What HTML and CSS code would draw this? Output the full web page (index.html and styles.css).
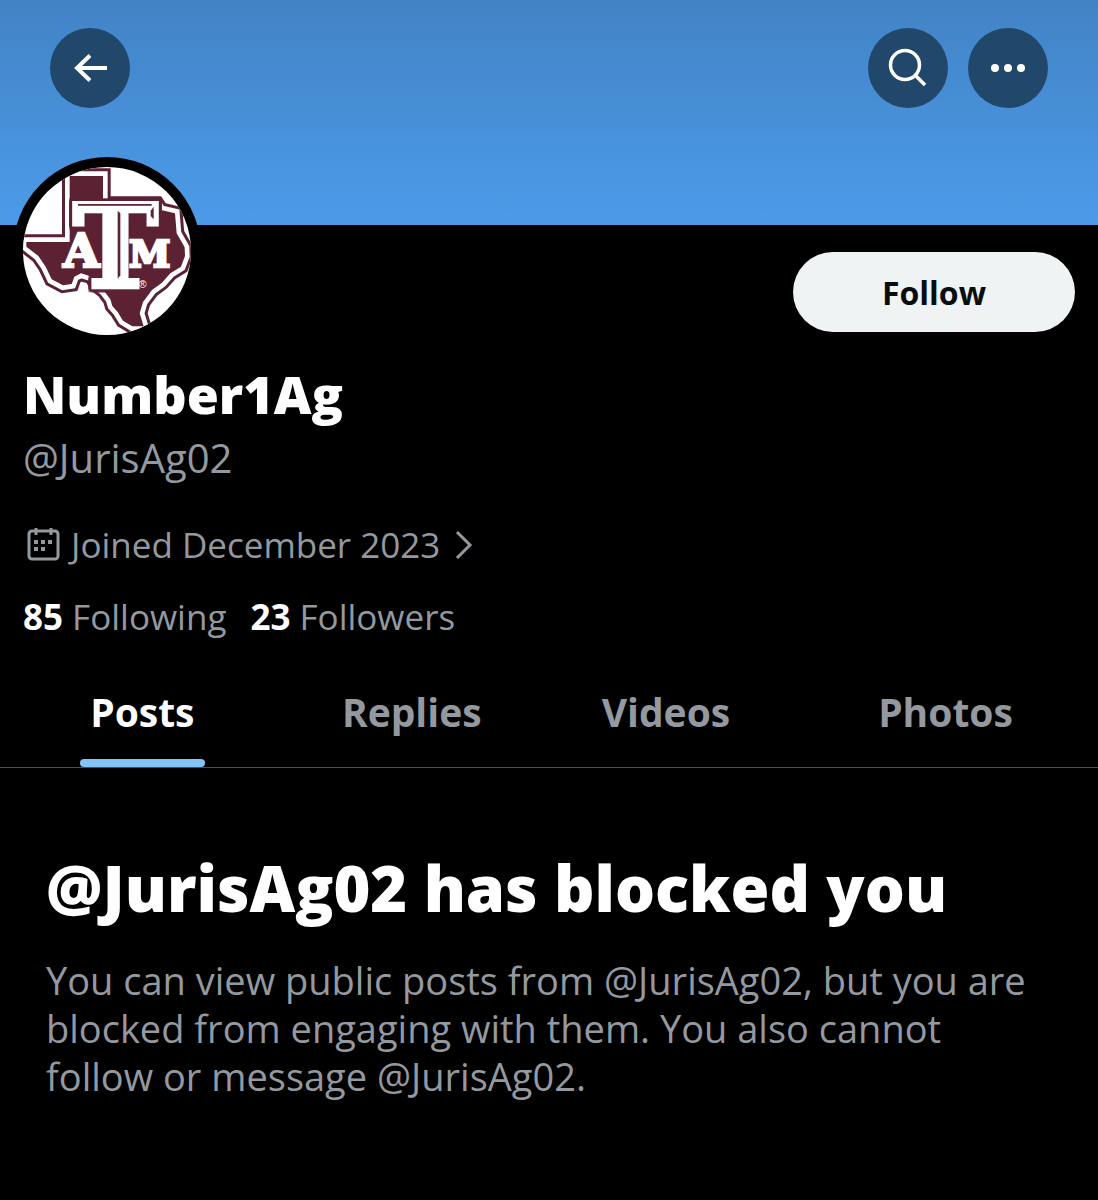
FILE: index.html
```
<!DOCTYPE html>
<html lang="en">

<head>
    <meta charset="UTF-8">
    <meta name="viewport" content="width=device-width, initial-scale=1.0">
    <title>Number1Ag (@JurisAg02)</title>
    <link rel="stylesheet" href="styles.css">
</head>

<body>
    <header class="banner">
        <button class="round-btn" aria-label="Back">
            <svg viewBox="0 0 80 80"><path d="M57 40H28M40 27.500L27 40l13 12.500" stroke-width="4"/></svg>
        </button>
        <div class="banner-actions">
            <button class="round-btn" aria-label="Search">
                <svg viewBox="0 0 80 80"><circle cx="37" cy="37" r="14.500" stroke-width="3.500"/><path d="M47 47l10 10" stroke-width="3.500"/></svg>
            </button>
            <button class="round-btn" aria-label="More">
                <svg viewBox="0 0 80 80"><g class="dots"><circle cx="27" cy="40" r="4"/><circle cx="40" cy="40" r="4"/><circle cx="53" cy="40" r="4"/></g></svg>
            </button>
        </div>
    </header>

    <main>
        <section class="profile">
            <div class="profile-top">
                <div class="avatar">
                    <svg viewBox="38 51 504 504" role="img" aria-label="Profile picture">
                        <defs>
                            <path id="state" d="M178 78H278V162H440L452 180L494 190L499 250L523 292L524 318L512 350L480 370L455 398L425 420L398 456L388 490L400 529H366L338 512L322 486L306 468L300 448L282 424L258 405L245 380L212 370L192 380L184 402L158 406L124 388L106 350L84 318L48 290V276H178Z"/>
                        </defs>
                        <rect x="38" y="51" width="504" height="504" fill="#fff"/>
                        <use href="#state" fill="none" stroke="#5c2234" stroke-width="46"/>
                        <use href="#state" fill="none" stroke="#fff" stroke-width="28"/>
                        <use href="#state" fill="#5c2234"/>
                        <g class="logo-letters">
                            <text class="big" x="315" y="411" font-size="340" stroke-width="14">T</text>
                            <text x="213" y="350" font-size="140" stroke-width="8">A</text>
                            <text x="418" y="350" font-size="112" stroke-width="8">M</text>
                        </g>
                        <!-- bevel on the big letter -->
                        <g fill="#5c2234">
                            <path d="M203 162H424V167H203Z"/>
                            <path d="M322 182L330 190V376L322 386Z"/>
                            <path d="M430 170V208L421 198V182Z"/>
                        </g>
                        <text class="mark" x="397" y="414">®</text>
                    </svg>
                </div>
                <button class="follow-btn">Follow</button>
            </div>

            <h1 class="name">Number1Ag</h1>
            <p class="handle">@JurisAg02</p>

            <a class="joined" href="#">
                <svg class="calendar" viewBox="0 0 40 40">
                    <rect x="6" y="6" width="29" height="28" rx="3"/>
                    <path d="M13 3v7M28 3v7"/>
                    <path class="days" d="M11 17h4M18 17h4M25 17h4M11 24h4M18 24h4"/>
                </svg>
                <span>Joined December 2023</span>
                <svg class="chevron" viewBox="0 0 20 32"><path d="M3 3l13 13L3 29"/></svg>
            </a>

            <div class="counts">
                <a href="#"><strong>85</strong> Following</a>
                <a href="#"><strong>23</strong> Followers</a>
            </div>
        </section>

        <nav class="tabs">
            <a class="tab active" href="#">Posts</a>
            <a class="tab" href="#">Replies</a>
            <a class="tab" href="#">Videos</a>
            <a class="tab" href="#">Photos</a>
        </nav>

        <section class="blocked">
            <h2>@JurisAg02 has blocked you</h2>
            <p>You can view public posts from @JurisAg02, but you are blocked from engaging with them. You also cannot follow or message @JurisAg02.</p>
        </section>
    </main>
</body>

</html>
```
FILE: styles.css
```
* {
    box-sizing: border-box;
}

body {
    margin: 0;
    background-color: #000;
    color: #fff;
    font-family: "Open Sans", "Noto Sans", sans-serif;
}

h1,
h2,
p {
    margin: 0;
}

a {
    color: inherit;
    text-decoration: none;
}

button {
    border: none;
    padding: 0;
    font-family: inherit;
    cursor: pointer;
}

.banner {
    display: flex;
    justify-content: space-between;
    align-items: flex-start;
    height: 225px;
    padding: 28px 50px;
    background: linear-gradient(#4283c5, #4c9be9);
}

.banner-actions {
    display: flex;
    gap: 20px;
}

.round-btn {
    width: 80px;
    height: 80px;
    border-radius: 50%;
    background-color: #21476a;
}

.round-btn svg {
    display: block;
    fill: none;
    stroke: #fff;
}

.round-btn .dots {
    fill: #fff;
    stroke: none;
}

.profile {
    padding: 0 23px;
}

.profile-top {
    display: flex;
    justify-content: space-between;
    align-items: flex-start;
    height: 139px;
}

/* the avatar overlaps the banner */
.avatar {
    width: 188px;
    height: 188px;
    margin: -68px 0 0 -10px;
    border: 10px solid #000;
    border-radius: 50%;
    background-color: #000;
}

.avatar svg {
    display: block;
    border-radius: 50%;
}

.logo-letters {
    fill: #fff;
    stroke: #fff;
    font-family: "DejaVu Serif", serif;
    font-weight: bold;
    text-anchor: middle;
}

.logo-letters .big {
    filter: drop-shadow(8px 0 0 #5c2234) drop-shadow(-8px 0 0 #5c2234) drop-shadow(0 8px 0 #5c2234) drop-shadow(0 -8px 0 #5c2234);
}

.mark {
    fill: #fff;
    font-family: "Liberation Sans", sans-serif;
    font-size: 32px;
    text-anchor: middle;
}

.follow-btn {
    width: 282px;
    height: 80px;
    margin-top: 27px;
    border-radius: 40px;
    background-color: #eff3f4;
    color: #0a0d10;
    font-size: 32px;
    font-weight: 700;
}

.name {
    font-size: 52px;
    line-height: 60px;
    font-weight: 800;
}

.handle {
    margin-top: 4px;
    color: #94999f;
    font-size: 40px;
    line-height: 60px;
}

.joined {
    display: flex;
    align-items: center;
    margin-top: 33px;
    color: #94999f;
    font-size: 35px;
    line-height: 48px;
}

.joined svg {
    fill: none;
    stroke: currentColor;
    stroke-width: 3;
}

.calendar {
    width: 40px;
    height: 40px;
    margin-right: 8px;
}

.calendar .days {
    stroke-width: 4;
}

.chevron {
    width: 20px;
    height: 32px;
    margin-left: 14px;
}

.counts {
    display: flex;
    gap: 24px;
    margin-top: 24px;
    color: #94999f;
    font-size: 35px;
    line-height: 48px;
}

.counts strong {
    color: #fff;
}

.tabs {
    display: grid;
    grid-template-columns: 28fr 25fr 25fr 30fr;
    justify-items: center;
    margin-top: 24px;
    border-bottom: 1px solid #4b4f52;
}

.tab {
    height: 102px;
    padding: 17px 10px 0;
    border-bottom: 8px solid transparent;
    color: #94999f;
    font-size: 39px;
    line-height: 60px;
    font-weight: 700;
}

.tab.active {
    position: relative;
    color: #fff;
}

.tab.active::after {
    content: "";
    position: absolute;
    left: 0;
    right: 0;
    bottom: -8px;
    height: 8px;
    border-radius: 4px;
    background-color: #84c3f8;
}

.blocked {
    padding: 80px 46px;
}

.blocked h2 {
    font-size: 63px;
    line-height: 80px;
    font-weight: 800;
}

.blocked p {
    margin-top: 28px;
    color: #94999f;
    font-size: 38px;
    line-height: 48px;
}
```
